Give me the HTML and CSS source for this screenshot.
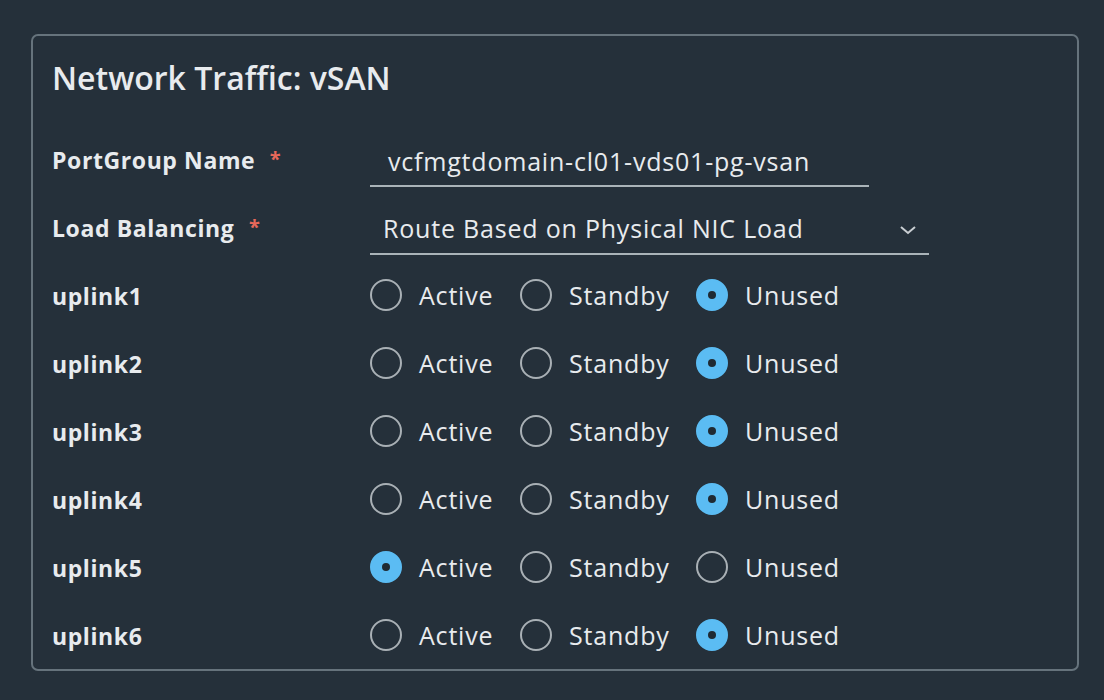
FILE: index.html
```html
<!DOCTYPE html>
<html>
<head>
<meta charset="utf-8">
<link rel="stylesheet" href="styles.css">
</head>
<body>
<div class="card">
  <h2 class="title">Network Traffic: vSAN</h2>
  <div class="form">
    <div class="row">
      <div class="label">PortGroup Name <span class="req">*</span></div>
      <div class="control"><div class="input">vcfmgtdomain-cl01-vds01-pg-vsan</div></div>
    </div>
    <div class="row">
      <div class="label">Load Balancing <span class="req">*</span></div>
      <div class="control"><div class="select"><span>Route Based on Physical NIC Load</span>
        <svg class="chev" width="18" height="12" viewBox="0 0 18 12"><path d="M2 3 L9 9 L16 3" fill="none" stroke="#c9ced2" stroke-width="2"/></svg></div></div>
    </div>
    <div class="row">
      <div class="label">uplink1</div>
      <div class="control radios"><span class="opt"><i class="r"></i>Active</span><span class="opt o2"><i class="r"></i>Standby</span><span class="opt o3"><i class="r on"></i>Unused</span></div>
    </div>
    <div class="row">
      <div class="label">uplink2</div>
      <div class="control radios"><span class="opt"><i class="r"></i>Active</span><span class="opt o2"><i class="r"></i>Standby</span><span class="opt o3"><i class="r on"></i>Unused</span></div>
    </div>
    <div class="row">
      <div class="label">uplink3</div>
      <div class="control radios"><span class="opt"><i class="r"></i>Active</span><span class="opt o2"><i class="r"></i>Standby</span><span class="opt o3"><i class="r on"></i>Unused</span></div>
    </div>
    <div class="row">
      <div class="label">uplink4</div>
      <div class="control radios"><span class="opt"><i class="r"></i>Active</span><span class="opt o2"><i class="r"></i>Standby</span><span class="opt o3"><i class="r on"></i>Unused</span></div>
    </div>
    <div class="row">
      <div class="label">uplink5</div>
      <div class="control radios"><span class="opt"><i class="r on"></i>Active</span><span class="opt o2"><i class="r"></i>Standby</span><span class="opt o3"><i class="r"></i>Unused</span></div>
    </div>
    <div class="row">
      <div class="label">uplink6</div>
      <div class="control radios"><span class="opt"><i class="r"></i>Active</span><span class="opt o2"><i class="r"></i>Standby</span><span class="opt o3"><i class="r on"></i>Unused</span></div>
    </div>
  </div>
</div>
</body>
</html>
```
FILE: styles.css
```css
html, body {
  margin: 0;
  padding: 0;
  background: #25303a;
  width: 1104px;
  height: 700px;
  overflow: hidden;
  font-family: "Open Sans", "Liberation Sans", sans-serif;
  color: #e8ebee;
}
.card {
  margin: 34px 0 0 31px;
  width: 1048px;
  height: 637px;
  border: 2px solid #66737c;
  border-radius: 7px;
  box-sizing: border-box;
  padding: 0 0 0 19px;
}
.title {
  margin: 0;
  padding-top: 22px;
  font-size: 32px;
  font-weight: 600;
  line-height: 40px;
  letter-spacing: 0;
}
.form {
  margin-top: 27px;
  display: flex;
  flex-direction: column;
}
.row {
  display: grid;
  grid-template-columns: 318px 1fr;
  height: 68px;
  align-items: center;
}
.label {
  font-weight: 700;
  font-size: 23px;
  letter-spacing: 0.6px;
  padding-top: 2px;
}
.req {
  color: #e8685a;
  margin-left: 8px;
  font-size: 20px;
  vertical-align: 3px;
}
.input {
  width: 499px;
  height: 46px;
  border-bottom: 2px solid #aab3b8;
  box-sizing: border-box;
  padding-left: 18px;
  font-size: 25px;
  letter-spacing: 0.8px;
  line-height: 40px;
  margin-top: 10px;
}
.select {
  width: 559px;
  height: 46px;
  border-bottom: 2px solid #aab3b8;
  box-sizing: border-box;
  padding-left: 13px;
  padding-right: 12px;
  padding-bottom: 6px;
  font-size: 25px;
  letter-spacing: 0.8px;
  line-height: 36px;
  display: flex;
  justify-content: space-between;
  align-items: center;
  margin-top: 10px;
}
.chev { margin-top: 4px; }
.radios {
  display: flex;
  align-items: center;
  font-size: 25px;
  letter-spacing: 0.8px;
}
.opt {
  display: flex;
  align-items: center;
  width: 150px;
}
.opt.o2 { width: 176px; }
.r {
  display: inline-block;
  flex: none;
  width: 32px;
  height: 32px;
  box-sizing: border-box;
  border: 2px solid #a9b0b5;
  border-radius: 50%;
  margin-right: 17px;
  position: relative;
}
.r.on {
  background: #5bbcf3;
  border-color: #5bbcf3;
}
.r.on::after {
  content: "";
  position: absolute;
  left: 50%;
  top: 50%;
  width: 8px;
  height: 8px;
  margin: -4px 0 0 -4px;
  border-radius: 50%;
  background: #1f2a33;
}
```
